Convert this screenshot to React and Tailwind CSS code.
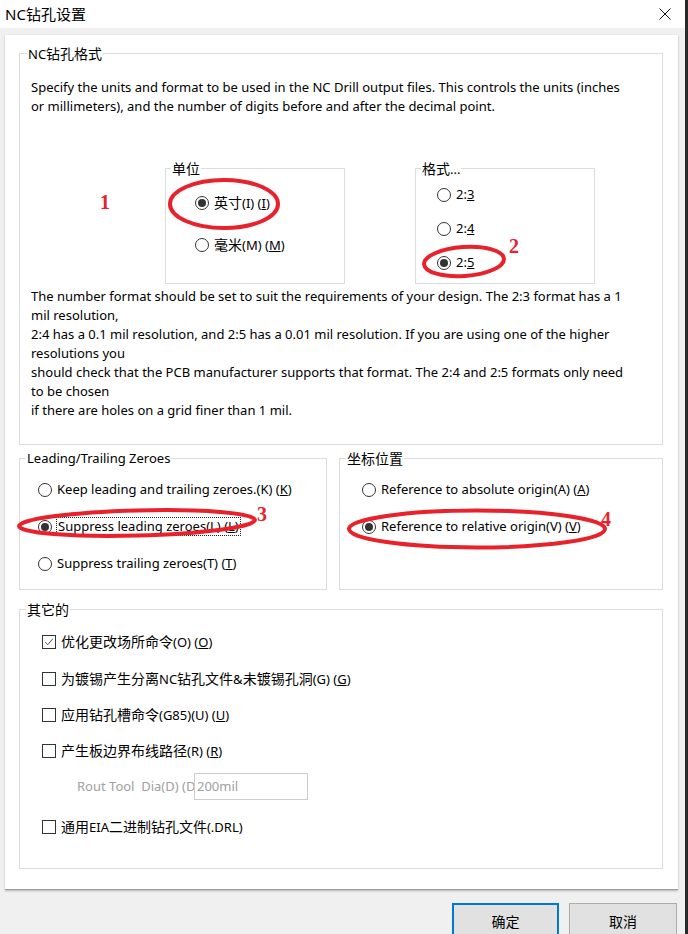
import React from "react";

const RED = "#e8212b";

function Z({ children }) {
  return <span className="text-[14px]">{children}</span>;
}

function Radio({ checked, children, className = "" }) {
  return (
    <div className={"flex items-center h-[19px] leading-[19px] " + className}>
      <span className="w-[14px] h-[14px] rounded-full border border-[#333] bg-white flex items-center justify-center shrink-0">
        {checked && <span className="w-[8px] h-[8px] rounded-full bg-[#333]" />}
      </span>
      <span className="ml-[5px] whitespace-nowrap">{children}</span>
    </div>
  );
}

function Check({ checked, children, className = "" }) {
  return (
    <div className={"flex items-center h-[19px] leading-[19px] " + className}>
      <span className="w-[14px] h-[14px] border border-[#333] bg-white flex items-center justify-center shrink-0">
        {checked && (
          <svg viewBox="0 0 14 14" className="w-[14px] h-[14px]">
            <path d="M2.5 7.2 L5.5 10.2 L11.5 3.2" fill="none" stroke="#333" strokeWidth="1" />
          </svg>
        )}
      </span>
      <span className="ml-[5px] whitespace-nowrap">{children}</span>
    </div>
  );
}

function Group({ title, className = "", legendLeft = "left-[6px]", children }) {
  return (
    <div className={"relative border border-[#dcdcdc] " + className}>
      <span className={"absolute top-[-10px] bg-white px-[1px] leading-[19px] whitespace-nowrap " + legendLeft}>
        {title}
      </span>
      {children}
    </div>
  );
}

export default function App() {
  return (
    <div className="relative w-[688px] h-[934px] overflow-hidden bg-[#f0f0f0] flex text-[13px] text-black font-['Noto_Sans','Noto_Sans_CJK_SC',sans-serif]">
      <div className="w-[685px] flex flex-col">
        {/* Title bar */}
        <div className="h-[28px] bg-white flex items-center justify-between pl-[5px] pr-[14px] shrink-0">
          <span className="text-[15px] leading-[20px]">NC钻孔设置</span>
          <svg width="12" height="12" viewBox="0 0 12 12">
            <path d="M0.5 0.5 L11.5 11.5 M11.5 0.5 L0.5 11.5" stroke="#111" strokeWidth="1" />
          </svg>
        </div>

        {/* Panel */}
        <div className="mt-[7px] ml-[5px] w-[673px] h-[855px] bg-white border-b border-[#9a9a9a] shadow-[0_1px_2px_rgba(0,0,0,0.25)] shrink-0 pt-[18px] pl-[14px]">
          {/* NC钻孔格式 */}
          <Group title={<>NC<Z>钻孔格式</Z></>} legendLeft="left-[7px]" className="w-[644px] h-[392px]">
            <div className="pt-[24px] pl-[11px] leading-[19px] whitespace-nowrap">
              Specify the units and format to be used in the NC Drill output files. This controls the units (inches
              <br />
              or millimeters), and the number of digits before and after the decimal point.
            </div>
            <div className="flex mt-[52px] ml-[145px] gap-[70px]">
              <Group title={<Z>单位</Z>} legendLeft="left-[5px]" className="w-[180px] h-[116px]">
                <div className="flex flex-col pt-[24px] pl-[29px] gap-[23px]">
                  <Radio checked>
                    <Z>英寸</Z>(I) (<u>I</u>)
                  </Radio>
                  <Radio>
                    <Z>毫米</Z>(M) (<u>M</u>)
                  </Radio>
                </div>
              </Group>
              <Group title={<><Z>格式</Z>...</>} legendLeft="left-[5px]" className="w-[180px] h-[116px]">
                <div className="flex flex-col pt-[16px] pl-[21px] gap-[15px]">
                  <Radio>
                    2:<u>3</u>
                  </Radio>
                  <Radio>
                    2:<u>4</u>
                  </Radio>
                  <Radio checked>
                    2:<u>5</u>
                  </Radio>
                </div>
              </Group>
            </div>
            <div className="mt-[3px] pl-[11px] leading-[19px] whitespace-nowrap">
              The number format should be set to suit the requirements of your design. The 2:3 format has a 1
              <br />
              mil resolution,
              <br />
              2:4 has a 0.1 mil resolution, and 2:5 has a 0.01 mil resolution. If you are using one of the higher
              <br />
              resolutions you
              <br />
              should check that the PCB manufacturer supports that format. The 2:4 and 2:5 formats only need
              <br />
              to be chosen
              <br />
              if there are holes on a grid finer than 1 mil.
            </div>
          </Group>

          {/* Row 2 */}
          <div className="flex gap-[12px] mt-[13px]">
            <Group title="Leading/Trailing Zeroes" className="w-[308px] h-[132px]">
              <div className="flex flex-col pt-[21px] pl-[18px] gap-[18px]">
                <Radio>
                  Keep leading and trailing zeroes.(K) (<u>K</u>)
                </Radio>
                <div className="flex items-center h-[19px]">
                  <span className="w-[14px] h-[14px] rounded-full border border-[#333] bg-white flex items-center justify-center shrink-0">
                    <span className="w-[8px] h-[8px] rounded-full bg-[#333]" />
                  </span>
                  <span className="ml-[4px] whitespace-nowrap border border-dotted border-[#222] px-[1px] leading-[17px]">
                    Suppress leading zeroes(L) (<u>L</u>)
                  </span>
                </div>
                <Radio>
                  Suppress trailing zeroes(T) (<u>T</u>)
                </Radio>
              </div>
            </Group>
            <Group title={<Z>坐标位置</Z>} className="w-[324px] h-[132px]">
              <div className="flex flex-col pt-[21px] pl-[22px] gap-[18px]">
                <Radio>
                  Reference to absolute origin(A) (<u>A</u>)
                </Radio>
                <Radio checked>
                  Reference to relative origin(V) (<u>V</u>)
                </Radio>
              </div>
            </Group>
          </div>

          {/* 其它的 */}
          <Group title={<Z>其它的</Z>} className="w-[644px] h-[260px] mt-[19px]">
            <div className="flex flex-col pt-[22px] pl-[22px]">
              <Check checked>
                <Z>优化更改场所命令</Z>(O) (<u>O</u>)
              </Check>
              <Check className="mt-[18px]">
                <Z>为镀锡产生分离</Z>NC<Z>钻孔文件</Z>&amp;<Z>未镀锡孔洞</Z>(G) (<u>G</u>)
              </Check>
              <Check className="mt-[17px]">
                <Z>应用钻孔槽命令</Z>(G85)(U) (<u>U</u>)
              </Check>
              <Check className="mt-[17px]">
                <Z>产生板边界布线路径</Z>(R) (<u>R</u>)
              </Check>
              <div className="flex items-center mt-[13px] ml-[35px]">
                <span className="w-[117px] overflow-hidden whitespace-nowrap text-[#a0a0a0]">
                  Rout Tool&nbsp; Dia(D) (D)
                </span>
                <div className="w-[114px] h-[27px] border border-[#cccccc] flex items-center pl-[2px] text-[#a0a0a0]">
                  200mil
                </div>
              </div>
              <Check className="mt-[17px]">
                <Z>通用</Z>EIA<Z>二进制钻孔文件</Z>(.DRL)
              </Check>
            </div>
          </Group>
        </div>

        {/* Buttons */}
        <div className="flex mt-[13px] ml-[452px] gap-[10px]">
          <div className="w-[107px] h-[36px] bg-[#e1e1e1] border-2 border-[#0078d7] flex items-center justify-center text-[14px]">
            确定
          </div>
          <div className="w-[108px] h-[36px] bg-[#e1e1e1] border border-[#adadad] flex items-center justify-center text-[14px]">
            取消
          </div>
        </div>
      </div>
      <div className="w-[3px] bg-[#2a2a2a]" />

      {/* Annotations */}
      <svg className="absolute inset-0 pointer-events-none" width="688" height="934">
        <g fill="none" stroke={RED} strokeWidth="4">
          <ellipse cx="224" cy="204" rx="54" ry="24" />
          <ellipse cx="464" cy="261.5" rx="40" ry="14.5" transform="rotate(-4 464 261.5)" />
          <ellipse cx="137" cy="523" rx="118" ry="12.5" transform="rotate(-1.5 137 523)" />
          <ellipse cx="477" cy="529" rx="128" ry="18.5" />
        </g>
      </svg>
      <span className="absolute left-[100px] top-[190px] text-[20px] leading-[24px] font-bold font-['Liberation_Serif',serif] text-[#e8212b]">1</span>
      <span className="absolute left-[509px] top-[234px] text-[20px] leading-[24px] font-bold font-['Liberation_Serif',serif] text-[#e8212b]">2</span>
      <span className="absolute left-[257px] top-[502px] text-[20px] leading-[24px] font-bold font-['Liberation_Serif',serif] text-[#e8212b]">3</span>
      <span className="absolute left-[601px] top-[507px] text-[20px] leading-[24px] font-bold font-['Liberation_Serif',serif] text-[#e8212b]">4</span>
    </div>
  );
}
